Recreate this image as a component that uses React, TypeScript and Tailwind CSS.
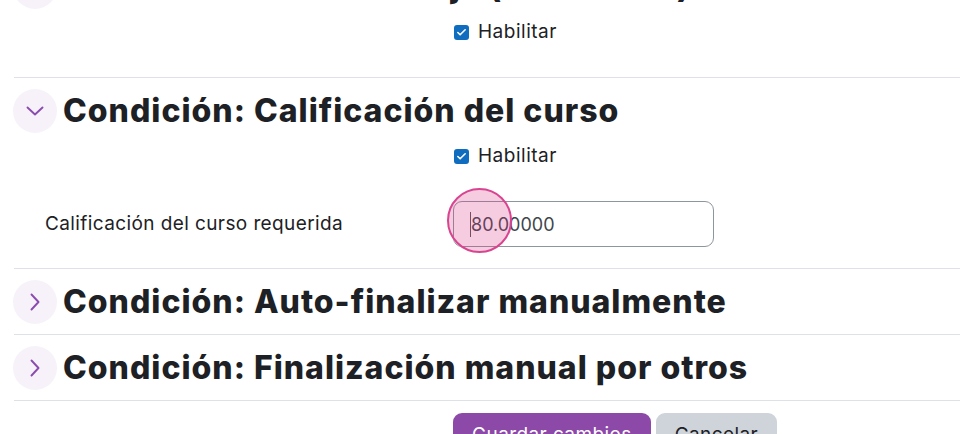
import { Check } from 'lucide-react';

const body = "font-['Inter',sans-serif]";

function Toggle({ open }: { open: boolean }) {
  return (
    <span className="flex h-[44px] w-[44px] shrink-0 items-center justify-center rounded-full bg-[#f7f2f9]">
      {open ? (
        <svg width="18" height="10" viewBox="0 0 18 10" fill="none" stroke="#8a4cae" strokeWidth="1.9" strokeLinecap="round" strokeLinejoin="round">
          <path d="M1.5 1.5l7.5 7 7.5-7" />
        </svg>
      ) : (
        <svg width="10" height="18" viewBox="0 0 10 18" fill="none" stroke="#8a4cae" strokeWidth="1.9" strokeLinecap="round" strokeLinejoin="round">
          <path d="M1.5 1.5l7 7.5-7 7.5" />
        </svg>
      )}
    </span>
  );
}

function Header({ title, open }: { title: string; open: boolean }) {
  return (
    <div className="flex h-[65px] items-center gap-[6px] -ml-[1px]">
      <Toggle open={open} />
      <h3 className="whitespace-nowrap text-[32px] font-extrabold leading-none tracking-[1px] text-[#1d2125]">{title}</h3>
    </div>
  );
}

function Enable() {
  return (
    <div className="mt-[2px] flex h-[22px] items-center pl-[440px]">
      <span className="flex h-[15px] w-[15px] items-center justify-center rounded-[3px] bg-[#0f6cbf]">
        <Check className="h-[11px] w-[11px] text-white" strokeWidth={3.5} />
      </span>
      <span className="ml-[9px] text-[19px] tracking-[0.5px] text-[#1d2125]">Habilitar</span>
    </div>
  );
}

export default function App() {
  return (
    <div className={`h-[434px] w-[960px] overflow-hidden bg-white ${body}`}>
      <div className="pl-[14px]">
        {/* previous section, scrolled off the top */}
        <section className="-mt-[46px] border-b border-[#dee2e6] pb-[34px]">
          <Header title="Condición: Darse de baja (matricular)" open />
          <Enable />
        </section>

        <section className="border-b border-[#dee2e6] pb-[21px]">
          <Header title="Condición: Calificación del curso" open />
          <Enable />
          <div className="mt-[34px] flex h-[46px] items-center">
            <label className="w-[439px] pl-[31px] text-[19px] tracking-[0.4px] text-[#1d2125]">Calificación del curso requerida</label>
            <div className="relative">
              <input
                readOnly
                value="80.00000"
                className="h-[46px] w-[261px] rounded-[9px] border border-[#8f959e] bg-white pl-[17px] text-[18px] text-[#40464c] outline-none"
              />
              <span className="pointer-events-none absolute left-[17px] top-[11px] h-[25px] w-[1px] bg-[#555]" />
              <span className="pointer-events-none absolute left-[-6px] top-[-13px] h-[65px] w-[65px] rounded-full border-2 border-[#d9438f] bg-[#d63384]/25" />
            </div>
          </div>
        </section>

        <section className="border-b border-[#dee2e6]">
          <Header title="Condición: Auto-finalizar manualmente" open={false} />
        </section>

        <section className="border-b border-[#dee2e6]">
          <Header title="Condición: Finalización manual por otros" open={false} />
        </section>

        <div className="flex gap-[5px] pl-[439px] pt-[12px]">
          <button className="h-[45px] rounded-[9px] bg-[#8c49a8] px-[19px] text-[19px] tracking-[0.4px] text-white">Guardar cambios</button>
          <button className="h-[45px] rounded-[9px] bg-[#ced4da] px-[19px] text-[19px] tracking-[0.4px] text-[#1d2125]">Cancelar</button>
        </div>
      </div>
    </div>
  );
}
